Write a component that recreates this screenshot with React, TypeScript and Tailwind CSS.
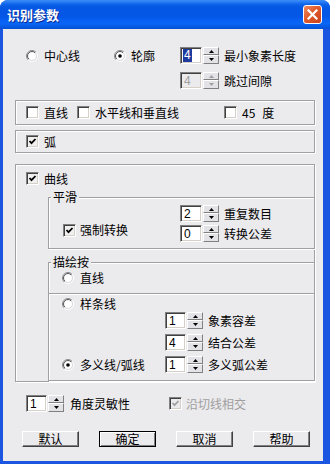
import React from 'react';

function Radio({ on }: { on?: boolean }) {
  return (
    <svg width="12" height="12" viewBox="0 0 12 12" className="shrink-0">
      <defs>
        <linearGradient id="ro" x1="0" y1="0" x2="1" y2="1">
          <stop offset="0.5" stopColor="#8a8a8e" />
          <stop offset="0.5" stopColor="#ffffff" />
        </linearGradient>
        <linearGradient id="ri" x1="0" y1="0" x2="1" y2="1">
          <stop offset="0.5" stopColor="#505050" />
          <stop offset="0.5" stopColor="#d8d6dc" />
        </linearGradient>
      </defs>
      <circle cx="6" cy="6" r="5.5" fill="none" stroke="url(#ro)" />
      <circle cx="6" cy="6" r="4.5" fill="#ffffff" stroke="url(#ri)" />
      {on && <circle cx="6" cy="6" r="1.8" fill="#000000" />}
    </svg>
  );
}

function Check({ on, disabled }: { on?: boolean; disabled?: boolean }) {
  return (
    <span
      className={
        'flex h-[13px] w-[13px] shrink-0 items-center justify-center border border-t-[#808080] border-l-[#808080] border-b-white border-r-white shadow-[inset_1px_1px_0_#404040,inset_-1px_-1px_0_#d4d0c8] ' +
        (disabled ? 'bg-[#ebeaed]' : on ? 'bg-[#f0f0f0]' : 'bg-white')
      }
    >
      {on && (
        <svg width="9" height="9" viewBox="0 0 9 9">
          <polyline
            points="1.5,4 3.5,6.2 7.5,2"
            fill="none"
            stroke={disabled ? '#a0a0a0' : '#000000'}
            strokeWidth="1.8"
          />
        </svg>
      )}
    </span>
  );
}

function Arrow({ up, disabled }: { up?: boolean; disabled?: boolean }) {
  return (
    <svg width="5" height="3" viewBox="0 0 5 3">
      <polygon
        points={up ? '2.5,0 5,3 0,3' : '0,0 5,0 2.5,3'}
        fill={disabled ? '#a0a0a0' : '#000000'}
      />
    </svg>
  );
}

function Spin({
  value,
  sel,
  disabled,
  wide,
}: {
  value: string;
  sel?: boolean;
  disabled?: boolean;
  wide?: boolean;
}) {
  return (
    <div className="flex h-[17px] shrink-0 items-stretch">
      <div
        className={
          'flex items-center border border-t-[#808080] border-l-[#808080] border-b-white border-r-white pl-[2px] shadow-[inset_1px_1px_0_#404040,inset_-1px_-1px_0_#d4d0c8] ' +
          (wide ? 'w-[22px] ' : 'w-[21px] ') +
          (disabled ? 'bg-[#ebeaed] text-[#a0a0a0]' : 'bg-white text-black')
        }
      >
        <span
          className={
            "font-['Liberation_Sans',sans-serif] text-[12px] " +
            (sel ? 'bg-[#1f3a9e] px-[1px] leading-[13px] text-white' : 'pl-[1px] leading-[12px]')
          }
        >
          {value}
        </span>
      </div>
      <div className="ml-[1px] flex w-[16px] flex-col">
        <div className="flex h-[8px] items-center justify-center border border-t-white border-l-white border-b-[#808080] border-r-[#808080] bg-[#e3e2e6]">
          <Arrow up disabled={disabled} />
        </div>
        <div className="flex h-[9px] items-center justify-center border border-t-white border-l-white border-b-[#808080] border-r-[#808080] bg-[#e3e2e6]">
          <Arrow disabled={disabled} />
        </div>
      </div>
    </div>
  );
}

function Btn({ label, def }: { label: string; def?: boolean }) {
  return (
    <div
      className={
        'flex h-[16px] w-[57px] items-center justify-center bg-[#ebeaed] text-[12px] leading-none ' +
        (def
          ? 'border border-black shadow-[inset_1px_1px_0_#ffffff,inset_-1px_-1px_0_#808080]'
          : 'border border-t-white border-l-white border-b-[#404040] border-r-[#404040] shadow-[inset_-1px_-1px_0_#808080]')
      }
    >
      {label}
    </div>
  );
}

export default function App() {
  return (
    <div className="h-[464px] w-[330px] overflow-hidden bg-white font-['Noto_Sans_CJK_SC',sans-serif] text-[12px] text-black">
      <div className="flex h-[464px] w-[330px] flex-col rounded-t-[8px] bg-[#1c56e0]">
        {/* title bar */}
        <div className="flex h-[29px] shrink-0 items-center justify-between rounded-t-[8px] bg-[linear-gradient(to_bottom,#3a8cf8_0%,#2d7ff6_6%,#0f66ea_14%,#0458e4_24%,#0456e6_56%,#0760f2_70%,#0a66f6_80%,#075ce8_90%,#0650d2_100%)] pl-[7px] pr-[8px]">
          <span className="text-[13px] font-bold leading-none text-white [text-shadow:1px_1px_0_#0a2a90]">
            识别参数
          </span>
          <div className="flex h-[19px] w-[19px] items-center justify-center rounded-[3px] border border-white bg-[linear-gradient(135deg,#ee8a62_0%,#e05a2c_45%,#c8401a_100%)]">
            <svg width="11" height="11" viewBox="0 0 11 11">
              <path d="M1.5 1.5 L9.5 9.5 M9.5 1.5 L1.5 9.5" stroke="#ffffff" strokeWidth="2.2" strokeLinecap="square" />
            </svg>
          </div>
        </div>

        {/* content */}
        <div className="mb-[3px] ml-[3px] mr-[7px] flex flex-1 flex-col bg-[#ebeaed] pl-[12px]">
          {/* row 1 */}
          <div className="mt-[18px] flex h-[17px] items-center">
            <div className="flex w-[99px] items-center gap-[6px] pl-[11px]">
              <Radio />
              <span>中心线</span>
            </div>
            <div className="flex w-[66px] items-center gap-[5px]">
              <Radio on />
              <span>轮廓</span>
            </div>
            <Spin value="4" sel wide />
            <span className="ml-[5px]">最小象素长度</span>
          </div>
          {/* row 2 */}
          <div className="mt-[8px] flex h-[17px] items-center pl-[165px]">
            <Spin value="4" disabled wide />
            <span className="ml-[5px]">跳过间隙</span>
          </div>

          {/* group 1 */}
          <div className="mt-[11px] flex h-[25px] w-[300px] items-center border border-[#a0a0a4] pl-[10px] shadow-[inset_1px_1px_0_#ffffff,1px_1px_0_#ffffff]">
            <div className="flex w-[51px] items-center gap-[5px]">
              <Check />
              <span>直线</span>
            </div>
            <div className="flex w-[147px] items-center gap-[5px]">
              <Check />
              <span>水平线和垂直线</span>
            </div>
            <div className="flex items-center gap-[5px]">
              <Check />
              <span>
                45<span className="ml-[7px]">度</span>
              </span>
            </div>
          </div>

          {/* group 2 */}
          <div className="mt-[5px] flex h-[23px] w-[300px] items-center border border-[#a0a0a4] pl-[10px] shadow-[inset_1px_1px_0_#ffffff,1px_1px_0_#ffffff]">
            <div className="flex items-center gap-[5px]">
              <Check on />
              <span>弧</span>
            </div>
          </div>

          {/* group 3 */}
          <div className="mt-[11px] flex w-[300px] flex-col border border-[#a0a0a4] pt-[7px] shadow-[inset_1px_1px_0_#ffffff,1px_1px_0_#ffffff]">
            <div className="flex h-[13px] items-center gap-[5px] pl-[10px]">
              <Check on />
              <span>曲线</span>
            </div>

            {/* 平滑 */}
            <div className="relative ml-[32px] mr-[-1px] mt-[12px] flex items-end border border-[#a0a0a4] pb-[6px] pl-[14px] pt-[7px] shadow-[inset_1px_1px_0_#ffffff,1px_1px_0_#ffffff]">
              <span className="absolute left-[2px] top-[-9px] bg-[#ebeaed] px-[2px] leading-[16px]">平滑</span>
              <div className="mb-[3px] flex w-[117px] items-center gap-[4px]">
                <Check on />
                <span>强制转换</span>
              </div>
              <div className="flex flex-col gap-[3px]">
                <div className="flex h-[17px] items-center">
                  <Spin value="2" wide />
                  <span className="ml-[5px]">重复数目</span>
                </div>
                <div className="flex h-[17px] items-center">
                  <Spin value="0" wide />
                  <span className="ml-[5px]">转换公差</span>
                </div>
              </div>
            </div>

            {/* 描绘按 */}
            <div className="relative ml-[32px] mr-[-1px] mt-[13px] flex flex-col border border-[#a0a0a4] pb-[7px] pt-[6px] shadow-[inset_1px_1px_0_#ffffff,1px_1px_0_#ffffff]">
              <span className="absolute left-[2px] top-[-9px] bg-[#ebeaed] px-[2px] leading-[16px]">描绘按</span>
              <div className="flex h-[17px] items-center gap-[6px] pl-[13px]">
                <Radio />
                <span>直线</span>
              </div>
              <div className="mt-[7px] h-[2px] border-t border-[#a0a0a4] bg-white" />
              <div className="flex h-[17px] items-center gap-[6px] pl-[13px]">
                <Radio />
                <span>样条线</span>
              </div>
              <div className="flex h-[17px] items-center pl-[116px]">
                <Spin value="1" />
                <span className="ml-[5px]">象素容差</span>
              </div>
              <div className="mt-[5px] flex h-[17px] items-center pl-[116px]">
                <Spin value="4" />
                <span className="ml-[5px]">结合公差</span>
              </div>
              <div className="mt-[5px] flex h-[17px] items-center pl-[13px]">
                <div className="flex w-[103px] items-center gap-[6px]">
                  <Radio on />
                  <span>多义线/弧线</span>
                </div>
                <Spin value="1" />
                <span className="ml-[5px]">多义弧公差</span>
              </div>
            </div>
          </div>

          {/* bottom row */}
          <div className="mt-[13px] flex h-[17px] items-center pl-[11px]">
            <div className="flex w-[143px] items-center">
              <Spin value="1" />
              <span className="ml-[6px]">角度灵敏性</span>
            </div>
            <div className="flex items-center gap-[4px] text-[#a0a0a0]">
              <Check on disabled />
              <span>沿切线相交</span>
            </div>
          </div>

          {/* buttons */}
          <div className="mt-[19px] flex gap-[20px] pl-[7px]">
            <Btn label="默认" />
            <Btn label="确定" def />
            <Btn label="取消" />
            <Btn label="帮助" />
          </div>
        </div>
      </div>
    </div>
  );
}
